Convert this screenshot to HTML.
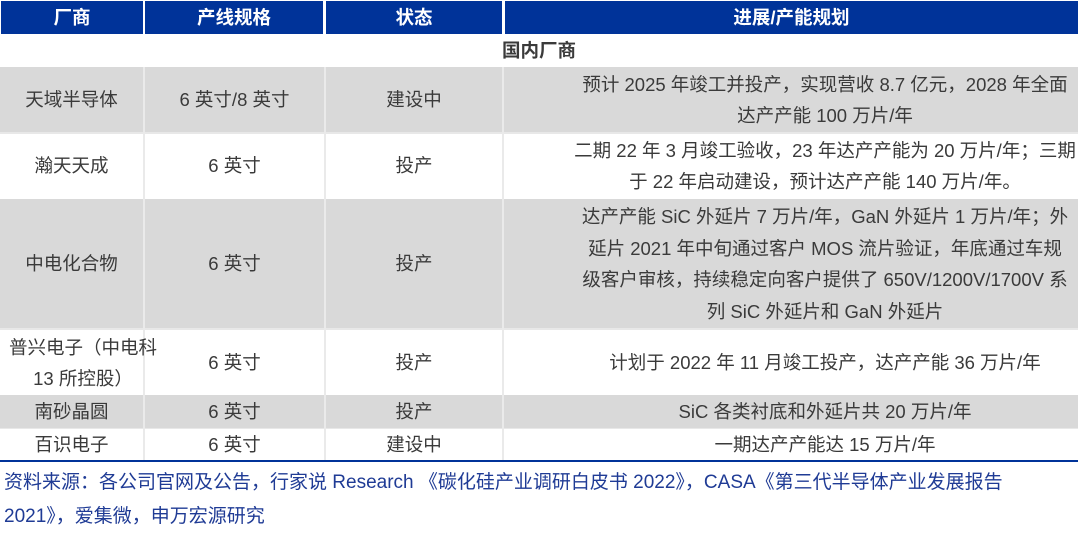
<!DOCTYPE html>
<html><head><meta charset="utf-8"><style>
*{margin:0;padding:0;box-sizing:border-box}
body{width:1080px;height:538px;background:#fff;position:relative;overflow:hidden;font-family:"Liberation Sans","Noto Sans CJK SC",sans-serif;color:#3a3a3a;font-size:18.5px}
.c{position:absolute;display:flex;align-items:center;justify-content:center;text-align:center;line-height:24px;white-space:nowrap}
.h{background:#003399;color:#fff;font-weight:bold;top:1px;height:33px}
.g{background:#d9d9d9}
.vl{position:absolute;width:2px;background:#eaeaea}
.src{position:absolute;left:4px;color:#1f3b95;font-size:19px;line-height:34px;white-space:nowrap}
</style></head><body>
<div class="c h" style="left:1px;width:142px">厂商</div>
<div class="c h" style="left:145px;width:178px">产线规格</div>
<div class="c h" style="left:326px;width:176px">状态</div>
<div class="c h" style="left:505px;width:573px">进展/产能规划</div>
<div class="c" style="left:0;width:1078px;top:34px;height:33px;font-weight:bold">国内厂商</div>

<div class="g" style="position:absolute;left:0;top:67px;width:1078px;height:65px"></div>
<div class="g" style="position:absolute;left:0;top:199px;width:1078px;height:130px"></div>
<div class="g" style="position:absolute;left:0;top:395px;width:1078px;height:33px"></div>
<div style="position:absolute;left:0;top:132px;width:1078px;height:2px;background:#e8e8e8"></div>
<div style="position:absolute;left:0;top:328px;width:1078px;height:2px;background:#e8e8e8"></div>
<div style="position:absolute;left:0;top:428px;width:1078px;height:1px;background:#e8e8e8"></div>
<div class="vl" style="left:143px;top:67px;height:394px"></div>
<div class="vl" style="left:324px;top:67px;height:394px"></div>
<div class="vl" style="left:502px;top:67px;height:394px"></div>
<div style="position:absolute;left:0;top:460px;width:1078px;height:2px;background:#003399"></div>

<div class="c" style="left:0;width:143px;top:67px;height:65px">天域半导体</div>
<div class="c" style="left:145px;width:179px;top:67px;height:65px">6 英寸/8 英寸</div>
<div class="c" style="left:326px;width:176px;top:67px;height:65px">建设中</div>
<div class="c" style="left:580px;width:490px;top:67px;height:65px;line-height:31px">预计 2025 年竣工并投产，实现营收 8.7 亿元，2028 年全面<br>达产产能 100 万片/年</div>

<div class="c" style="left:0;width:143px;top:133px;height:66px">瀚天天成</div>
<div class="c" style="left:145px;width:179px;top:133px;height:66px">6 英寸</div>
<div class="c" style="left:326px;width:176px;top:133px;height:66px">投产</div>
<div class="c" style="left:580px;width:490px;top:133px;height:66px;line-height:31px">二期 22 年 3 月竣工验收，23 年达产产能为 20 万片/年；三期<br>于 22 年启动建设，预计达产产能 140 万片/年。</div>

<div class="c" style="left:0;width:143px;top:199px;height:130px">中电化合物</div>
<div class="c" style="left:145px;width:179px;top:199px;height:130px">6 英寸</div>
<div class="c" style="left:326px;width:176px;top:199px;height:130px">投产</div>
<div class="c" style="left:580px;width:490px;top:199px;height:130px;line-height:31.5px">达产产能 SiC 外延片 7 万片/年，GaN 外延片 1 万片/年；外<br>延片 2021 年中旬通过客户 MOS 流片验证，年底通过车规<br>级客户审核，持续稳定向客户提供了 650V/1200V/1700V 系<br>列 SiC 外延片和 GaN 外延片</div>

<div class="c" style="left:8px;width:150px;top:330px;height:65px;line-height:31px">普兴电子（中电科<br>13 所控股）</div>
<div class="c" style="left:145px;width:179px;top:330px;height:65px">6 英寸</div>
<div class="c" style="left:326px;width:176px;top:330px;height:65px">投产</div>
<div class="c" style="left:580px;width:490px;top:330px;height:65px">计划于 2022 年 11 月竣工投产，达产产能 36 万片/年</div>

<div class="c" style="left:0;width:143px;top:395px;height:33px">南砂晶圆</div>
<div class="c" style="left:145px;width:179px;top:395px;height:33px">6 英寸</div>
<div class="c" style="left:326px;width:176px;top:395px;height:33px">投产</div>
<div class="c" style="left:580px;width:490px;top:395px;height:33px">SiC 各类衬底和外延片共 20 万片/年</div>

<div class="c" style="left:0;width:143px;top:429px;height:32px">百识电子</div>
<div class="c" style="left:145px;width:179px;top:429px;height:32px">6 英寸</div>
<div class="c" style="left:326px;width:176px;top:429px;height:32px">建设中</div>
<div class="c" style="left:580px;width:490px;top:429px;height:32px">一期达产产能达 15 万片/年</div>

<div class="src" style="top:466px">资料来源：各公司官网及公告，行家说 Research 《碳化硅产业调研白皮书 2022》，CASA《第三代半导体产业发展报告</div>
<div class="src" style="top:500px">2021》，爱集微，申万宏源研究</div>
</body></html>
